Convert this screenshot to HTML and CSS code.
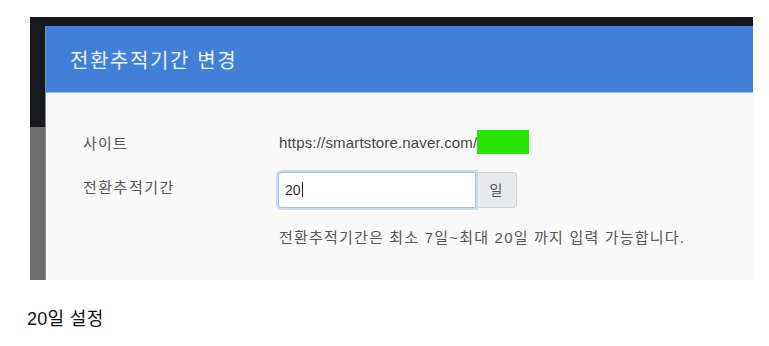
FILE: index.html
```html
<!DOCTYPE html>
<html lang="ko">
<head>
    <meta charset="UTF-8">
    <meta name="viewport" content="width=device-width, initial-scale=1.0">
    <title>전환추적기간 변경</title>
    <link rel="stylesheet" href="styles.css">
</head>
<body>
    <div class="shot">
        <div class="modal">
            <div class="modal-header">
                <h2 class="modal-title">전환추적기간 변경</h2>
            </div>
            <div class="modal-body">
                <div class="row row-site">
                    <div class="label">사이트</div>
                    <div class="value">
                        <span class="url">https://smartstore.naver.com/</span><span class="mask"></span>
                    </div>
                </div>
                <div class="row row-period">
                    <div class="label">전환추적기간</div>
                    <div class="value">
                        <div class="input-group">
                            <div class="input">20<span class="caret"></span></div>
                            <div class="addon">일</div>
                        </div>
                        <p class="help">전환추적기간은 최소 7일~최대 20일 까지 입력 가능합니다.</p>
                    </div>
                </div>
            </div>
        </div>
    </div>
    <p class="caption">20일 설정</p>
</body>
</html>
```

FILE: styles.css
```css
/* 기본 설정 */
body {
    margin: 0;
    padding: 17px 0 0 0;
    background: #fff;
    font-family: "Liberation Sans", "Noto Sans CJK KR", sans-serif;
}

.shot {
    margin-left: 30px;
    width: 723px;
    height: 263px;
    padding: 9px 0 0 16px;
    box-sizing: border-box;
    background: linear-gradient(to bottom, #17191c 0, #17191c 110px, #6d6d6d 110px, #6d6d6d 100%);
    overflow: hidden;
}

.modal {
    height: 100%;
    background: #f9f9f9;
    box-shadow: -1px 0 0 #8a8a8a;
}

.modal-header {
    height: 66px;
    background: #4080d8;
    border-bottom: 1px solid #8cb2e8;
    display: flex;
    align-items: center;
    padding-left: 24px;
}

.modal-title {
    margin: 0;
    font-family: "Noto Sans CJK KR", sans-serif;
    font-weight: 400;
    font-size: 20px;
    color: #edf3fc;
    letter-spacing: 1.6px;
}

.modal-body {
    padding: 36px 0 0 37px;
    font-family: "Liberation Sans", "Noto Sans CJK KR", sans-serif;
    font-size: 15px;
    color: #555;
}

.row {
    display: flex;
}

.label {
    width: 196px;
    letter-spacing: 1.2px;
    color: #555;
}

.row-site {
    align-items: center;
    height: 26px;
}

.url {
    color: #444;
    letter-spacing: 0.17px;
    vertical-align: middle;
}

.mask {
    display: inline-block;
    width: 52px;
    height: 24px;
    background: #26e600;
    vertical-align: middle;
}

.value {
    display: flex;
    flex-direction: column;
}

.row-site .value {
    flex-direction: row;
    align-items: center;
}

.row-period {
    margin-top: 17px;
}

.row-period .label {
    padding-top: 4px;
    letter-spacing: 1.5px;
}

.input-group {
    display: flex;
    align-items: center;
    margin-left: -1px;
}

.input {
    width: 190px;
    height: 34px;
    line-height: 34px;
    padding-left: 6px;
    background: #fff;
    border: 1px solid #a6c3ec;
    border-radius: 4px 0 0 4px;
    box-shadow: 0 0 0 2px #c8dbf4;
    color: #333;
    font-size: 14px;
    position: relative;
    z-index: 1;
}

.caret {
    display: inline-block;
    width: 1px;
    height: 15px;
    background: #222;
    vertical-align: -2px;
    margin-left: 1px;
}

.addon {
    width: 40px;
    height: 34px;
    line-height: 34px;
    text-align: center;
    background: #e8ebee;
    border: 1px solid #cfd4d9;
    border-left: none;
    border-radius: 0 4px 4px 0;
    color: #555;
    font-size: 14px;
}

.help {
    margin: 18px 0 0 0;
    letter-spacing: 1.2px;
    color: #555;
}

.caption {
    margin: 24px 0 0 27px;
    font-size: 18px;
    letter-spacing: 0.3px;
    color: #111;
}
```
